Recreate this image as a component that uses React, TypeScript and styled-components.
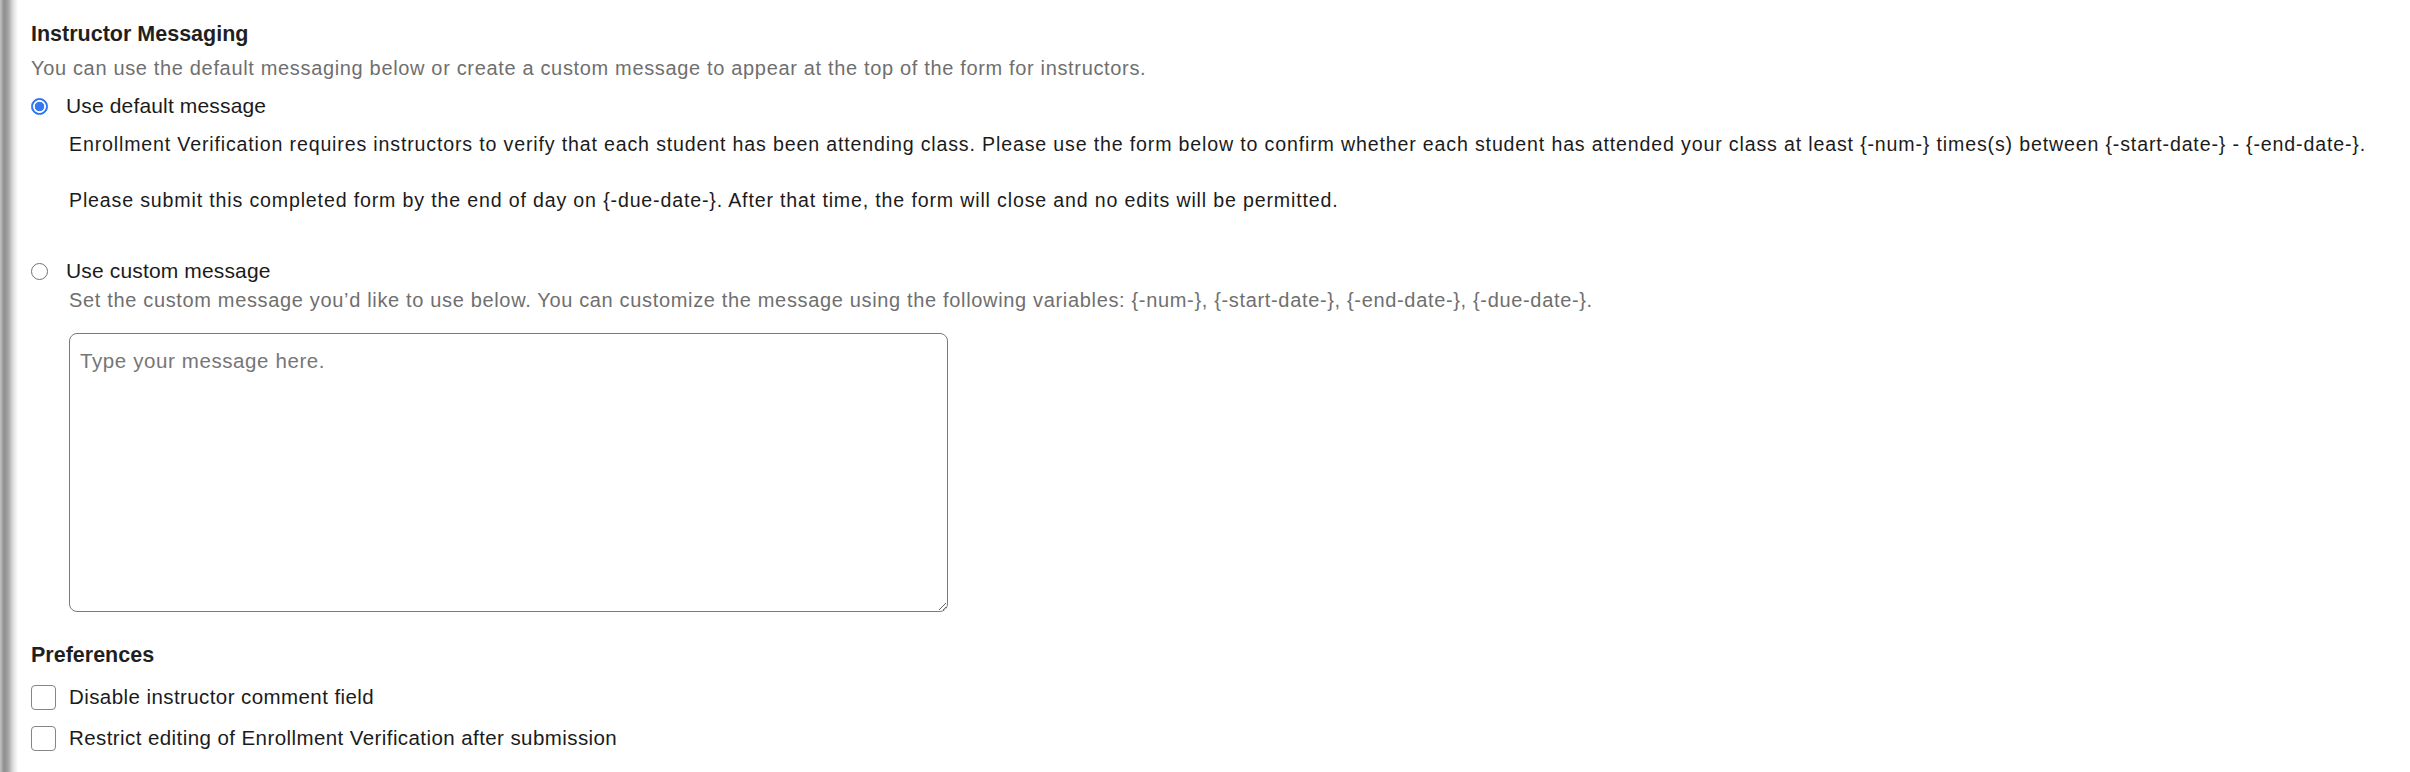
import React from "react";
import styled, { createGlobalStyle } from "styled-components";

const GlobalStyle = createGlobalStyle`
  html, body {
    margin: 0;
    padding: 0;
    background: #ffffff;
  }
  body {
    font-family: "Liberation Sans", Arial, Helvetica, sans-serif;
    color: #1d1d1f;
  }
  * { box-sizing: border-box; }
`;

const Page = styled.div`
  display: flex;
  min-height: 772px;
  width: 2410px;
  overflow: hidden;
`;

const EdgeShadow = styled.div`
  flex: 0 0 18px;
  background: linear-gradient(
    to right,
    #c4c4c4 0px,
    #8e8e8e 4px,
    #a2a2a2 8px,
    #dedede 13px,
    #ffffff 18px
  );
`;

const Content = styled.div`
  flex: 1;
  display: flex;
  flex-direction: column;
  padding: 20.5px 0 0 13px;
`;

const SectionTitle = styled.h2<{ $top?: number }>`
  margin: ${(p) => p.$top ?? 0}px 0 0 0;
  font-size: 21.5px;
  line-height: 26px;
  font-weight: 700;
  color: #1f1f21;
`;

const Helper = styled.p<{ $indent?: number; $top?: number }>`
  margin: ${(p) => p.$top ?? 0}px 0 0 ${(p) => p.$indent ?? 0}px;
  font-size: 20px;
  line-height: 26px;
  letter-spacing: 0.66px;
  color: #6f6f6f;
`;

const OptionRow = styled.label<{ $top?: number }>`
  display: flex;
  align-items: center;
  gap: 18px;
  margin-top: ${(p) => p.$top ?? 0}px;
  height: 28px;
  font-size: 21px;
  letter-spacing: 0.15px;
  color: #1b1b1b;
  cursor: pointer;
`;

const Radio = styled.input.attrs({ type: "radio" })`
  appearance: none;
  -webkit-appearance: none;
  margin: 0;
  width: 17px;
  height: 17px;
  border-radius: 50%;
  border: 1px solid #727272;
  background: #fff;
  flex: 0 0 auto;

  &:checked {
    border: 1px solid #2b6fe6;
    background: radial-gradient(
      circle at center,
      #3478f6 0,
      #3478f6 4.4px,
      #ffffff 5.1px,
      #ffffff 6px,
      #3478f6 6.8px
    );
  }
`;

const DefaultMessage = styled.div`
  margin: 10px 0 0 38px;
  display: flex;
  flex-direction: column;
  gap: 28px;
`;

const BodyText = styled.p`
  margin: 0;
  font-size: 19.6px;
  line-height: 28px;
  letter-spacing: 0.84px;
  color: #1b1b1b;
`;

const MessageBox = styled.textarea`
  margin: 20px 0 0 38px;
  width: 879px;
  height: 279px;
  border: 1.5px solid #7b7b7b;
  border-radius: 8px;
  padding: 14px 10px;
  font-family: "Liberation Sans", Arial, Helvetica, sans-serif;
  font-size: 20.5px;
  line-height: 26px;
  letter-spacing: 0.6px;
  color: #1b1b1b;
  resize: both;
  outline: none;

  &::placeholder {
    color: #767676;
  }
`;

const CheckRow = styled.label<{ $top?: number }>`
  display: flex;
  align-items: center;
  gap: 13px;
  margin-top: ${(p) => p.$top ?? 0}px;
  height: 26px;
  font-size: 20.5px;
  letter-spacing: 0.42px;
  color: #1b1b1b;
  cursor: pointer;
`;

const Checkbox = styled.input.attrs({ type: "checkbox" })`
  appearance: none;
  -webkit-appearance: none;
  margin: 0;
  width: 25px;
  height: 25px;
  border: 1.5px solid #858585;
  border-radius: 4px;
  background: #fff;
  flex: 0 0 auto;
`;

export default function App() {
  return (
    <>
      <GlobalStyle />
      <Page>
        <EdgeShadow />
        <Content>
          <SectionTitle>Instructor Messaging</SectionTitle>
          <Helper $top={8.5}>
            You can use the default messaging below or create a custom message to appear at the top of the form for instructors.
          </Helper>

          <OptionRow $top={11}>
            <Radio name="msg" defaultChecked />
            Use default message
          </OptionRow>
          <DefaultMessage>
            <BodyText>
              Enrollment Verification requires instructors to verify that each student has been attending class. Please use the form below to confirm whether each student has attended your class at least {"{-num-}"} times(s) between {"{-start-date-}"} - {"{-end-date-}"}.
            </BodyText>
            <BodyText>
              Please submit this completed form by the end of day on {"{-due-date-}"}. After that time, the form will close and no edits will be permitted.
            </BodyText>
          </DefaultMessage>

          <OptionRow $top={43}>
            <Radio name="msg" />
            Use custom message
          </OptionRow>
          <Helper $indent={38} $top={2}>
            Set the custom message you’d like to use below. You can customize the message using the following variables: {"{-num-}"}, {"{-start-date-}"}, {"{-end-date-}"}, {"{-due-date-}"}.
          </Helper>
          <MessageBox placeholder="Type your message here." />

          <SectionTitle $top={30}>Preferences</SectionTitle>
          <CheckRow $top={16}>
            <Checkbox />
            Disable instructor comment field
          </CheckRow>
          <CheckRow $top={15}>
            <Checkbox />
            Restrict editing of Enrollment Verification after submission
          </CheckRow>
        </Content>
      </Page>
    </>
  );
}
